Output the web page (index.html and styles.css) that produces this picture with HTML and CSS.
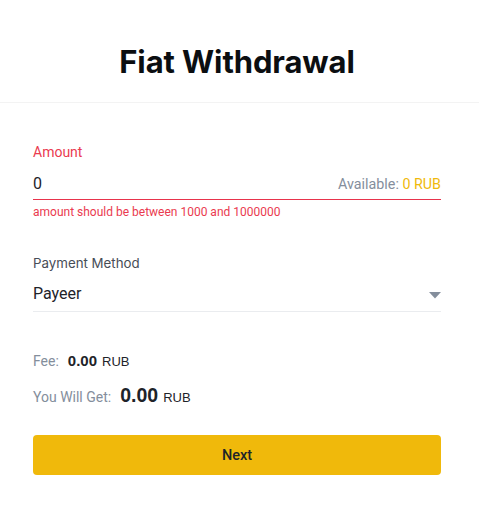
FILE: index.html
```html
<!DOCTYPE html>
<html>
<head>
<meta charset="utf-8">
<link rel="stylesheet" href="styles.css">
</head>
<body>
<header class="header"><h1 class="title">Fiat Withdrawal</h1></header>
<main class="form">
  <div class="label label-error">Amount</div>
  <div class="field field-error">
    <span class="value">0</span>
    <span class="available">Available: <span class="avail-num">0 RUB</span></span>
  </div>
  <div class="error-msg">amount should be between 1000 and 1000000</div>

  <div class="label label-pm">Payment Method</div>
  <div class="field field-select">
    <span class="select-value">Payeer</span>
    <svg class="caret" width="12" height="7" viewBox="0 0 12 7"><path d="M0 0H12L6 6.5Z" fill="#848e9c"/></svg>
  </div>

  <div class="summary-row fee-row"><span class="sum-label">Fee:</span><span class="fee-val">0.00</span><span class="cur">RUB</span></div>
  <div class="summary-row get-row"><span class="sum-label">You Will Get:</span><span class="get-val">0.00</span><span class="cur">RUB</span></div>

  <button class="btn">Next</button>
</main>
</body>
</html>
```
FILE: styles.css
```css
* { box-sizing: border-box; }
body { margin: 0; background: #fff; font-family: Roboto, "Liberation Sans", sans-serif; color: #1e2329; }
.header { padding: 42px 0 20px; border-bottom: 1px solid #f3f3f3; }
.title { margin: 0; padding-right: 5px; text-align: center; font-family: Inter, "Noto Sans", sans-serif; font-weight: 700; font-size: 31px; line-height: 40px; color: #0b0e11; letter-spacing: -0.1px; }
.form { padding: 0 38px 0 33px; }
.label { font-size: 14px; line-height: 20px; }
.label-error { margin-top: 39px; color: #ea3a4f; }
.field { display: flex; align-items: center; justify-content: space-between; }
.field-error { padding: 10px 0 3px; border-bottom: 1px solid #e8334c; line-height: 24px; }
.value { font-size: 16px; color: #1e2329; }
.available { font-size: 14.3px; color: #848e9c; }
.avail-num { color: #f0b90b; }
.error-msg { margin-top: 4px; font-size: 12px; line-height: 16px; color: #ea3a4f; }
.label-pm { margin-top: 33px; color: #474d57; font-family: Inter, "Noto Sans", sans-serif; font-size: 13.3px; }
.field-select { padding: 10px 0 6px; border-bottom: 1px solid #eaecef; line-height: 22px; }
.select-value { font-size: 16px; color: #1e2329; }
.caret { margin-top: 3px; }
.summary-row { display: flex; align-items: baseline; }
.fee-row { margin-top: 39px; line-height: 20px; }
.get-row { margin-top: 11px; line-height: 24px; }
.sum-label { font-size: 14px; color: #848e9c; margin-right: 9px; }
.fee-val { font-family: "Liberation Sans", Arial, sans-serif; font-weight: 700; font-size: 15px; margin-right: 5px; }
.get-val { font-family: "Liberation Sans", Arial, sans-serif; font-weight: 700; font-size: 19.5px; margin-right: 5px; }
.cur { font-family: "Liberation Sans", Arial, sans-serif; font-size: 13px; }
.btn { display: block; width: 100%; margin-top: 25px; height: 40px; border: 0; border-radius: 4px; background: #f0b90b; color: #1e2329; font-family: Roboto, "Liberation Sans", sans-serif; font-weight: 500; font-size: 14.5px; cursor: pointer; }
```
